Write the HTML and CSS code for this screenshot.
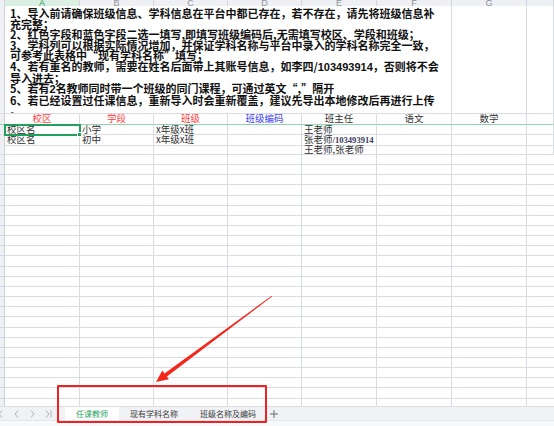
FILE: index.html
```html
<!DOCTYPE html>
<html lang="zh-CN">
<head>
<meta charset="utf-8">
<title>任课教师</title>
<link rel="stylesheet" href="styles.css">
</head>
<body>
<div class="app">
  <div class="row colhead">
    <div class="hc"></div>
    <div class="hc sel">A</div>
    <div class="hc">B</div>
    <div class="hc">C</div>
    <div class="hc">D</div>
    <div class="hc">E</div>
    <div class="hc">F</div>
    <div class="hc">G</div>
    <div class="hc"></div>
  </div>

  <div class="row intro-row">
    <div class="rh"></div>
    <div class="cell intro">
      <p>1、导入前请确保班级信息、学科信息在平台中都已存在，若不存在，请先将班级信息补</p>
      <p>充完整；</p>
      <p>2、红色字段和蓝色字段二选一填写,即填写班级编码后,无需填写校区、学段和班级；</p>
      <p>3、学科列可以根据实际情况增加，并保证学科名称与平台中录入的学科名称完全一致，</p>
      <p>可参考此表格中“现有学科名称”填写；</p>
      <p>4、若有重名的教师，需要在姓名后面带上其账号信息，如李四/<span class="num">103493914</span>，否则将不会</p>
      <p>导入进去；</p>
      <p>5、若有<span class="num">2</span>名教师同时带一个班级的同门课程，可通过英文“,”隔开</p>
      <p>6、若已经设置过任课信息，重新导入时会重新覆盖，建议先导出本地修改后再进行上传</p>
      <p>。</p>
    </div>
    <div class="cell"></div>
    <div class="cell"></div>
  </div>

  <div class="row head-row">
    <div class="rh"></div>
    <div class="cell th red">校区</div>
    <div class="cell th red">学段</div>
    <div class="cell th red">班级</div>
    <div class="cell th blue">班级编码</div>
    <div class="cell th">班主任</div>
    <div class="cell th">语文</div>
    <div class="cell th">数学</div>
    <div class="cell"></div>
  </div>

  <div class="row data-row">
    <div class="rh"></div>
    <div class="cell active">校区名</div>
    <div class="cell">小学</div>
    <div class="cell">x年级x班</div>
    <div class="cell"></div>
    <div class="cell">王老师</div>
    <div class="cell"></div>
    <div class="cell"></div>
    <div class="cell"></div>
  </div>
  <div class="row data-row">
    <div class="rh"></div>
    <div class="cell">校区名</div>
    <div class="cell">初中</div>
    <div class="cell">x年级x班</div>
    <div class="cell"></div>
    <div class="cell">张老师<span class="acct">/103493914</span></div>
    <div class="cell"></div>
    <div class="cell"></div>
    <div class="cell"></div>
  </div>
  <div class="row data-row">
    <div class="rh"></div>
    <div class="cell"></div>
    <div class="cell"></div>
    <div class="cell"></div>
    <div class="cell"></div>
    <div class="cell">王老师,张老师</div>
    <div class="cell"></div>
    <div class="cell"></div>
    <div class="cell"></div>
  </div>

  <div class="row filler">
    <div class="rh fill"></div>
    <div class="fill"></div>
    <div class="fill"></div>
    <div class="fill"></div>
    <div class="fill"></div>
    <div class="fill"></div>
    <div class="fill"></div>
    <div class="fill"></div>
    <div class="fill last"></div>
  </div>

  <div class="tabbar">
    <div class="nav">
      <span><svg width="6" height="8" viewBox="0 0 6 8"><line x1="0.5" y1="0.5" x2="0.5" y2="7.5"/><polyline points="5,0.5 2,4 5,7.5"/></svg></span>
      <span><svg width="5" height="8" viewBox="0 0 5 8"><polyline points="4,0.5 1,4 4,7.5"/></svg></span>
      <span><svg width="5" height="8" viewBox="0 0 5 8"><polyline points="1,0.5 4,4 1,7.5"/></svg></span>
      <span><svg width="7" height="8" viewBox="0 0 7 8"><polyline points="1,0.5 4,4 1,7.5"/><line x1="6" y1="0.5" x2="6" y2="7.5"/></svg></span>
    </div>
    <div class="tabs">
      <div class="tab on">任课教师</div>
      <div class="tab">现有学科名称</div>
      <div class="tab">班级名称及编码</div>
    </div>
    <div class="add"><svg width="8" height="8" viewBox="0 0 8 8"><line x1="4" y1="0" x2="4" y2="8"/><line x1="0" y1="4" x2="8" y2="4"/></svg></div>
  </div>
  <div class="status"></div>

  <div class="callout"></div>
  <svg class="arrow" width="554" height="426" viewBox="0 0 554 426">
    <polygon points="272.4,296.3 166.9,376.6 168.9,379.2 156,382 162.3,370.6 164.5,373.4 271.8,295.7"/>
  </svg>
</div>
</body>
</html>
```

FILE: styles.css
```css
:root {
  --line: #d9dce4;
  --cols: 5px 75px 74px 74px 74px 75px 75px 75px 1fr;
}

html, body {
  margin: 0;
  padding: 0;
}

body {
  width: 554px;
  height: 426px;
  overflow: hidden;
  background: #ffffff;
  font-family: "Noto Sans CJK SC", sans-serif;
}

.app {
  position: relative;
  width: 554px;
  height: 426px;
  display: flex;
  flex-direction: column;
  overflow: hidden;
}

.row {
  display: grid;
  grid-template-columns: var(--cols);
  flex: 0 0 auto;
}

/* column header strip (cut off at the top) */
.colhead {
  height: 6px;
  overflow: hidden;
  background: #eef0f4;
}

.hc {
  box-sizing: border-box;
  border-right: 1px solid #d3d6de;
  border-bottom: 1px solid #d3d6de;
  display: flex;
  justify-content: center;
  align-items: flex-end;
  font: 9px/7px "Liberation Sans", sans-serif;
  color: #8d929b;
}

.hc.sel {
  background: #dcefe3;
  color: #259b5a;
  border-bottom-color: #3bb878;
  box-shadow: inset 0 -1px 0 #3bb878;
}

/* generic cells */
.rh {
  box-sizing: border-box;
  background: #eef0f4;
  border-right: 1px solid #cdd0d8;
  border-bottom: 1px solid #dcdfe6;
}

.cell {
  box-sizing: border-box;
  min-width: 0;
  white-space: nowrap;
  border-right: 1px solid var(--line);
  border-bottom: 1px solid var(--line);
}

/* merged instruction cell */
.intro-row {
  grid-template-columns: 5px 447px 75px 1fr;
  height: 108px;
}

.intro {
  padding: 2px 0 0 5px;
  font: 700 11px/10.6px "Noto Sans CJK SC", sans-serif;
  color: #111111;
  overflow: hidden;
}

.intro p {
  margin: 0;
}

.intro .num {
  font-family: "Liberation Sans", sans-serif;
}

/* header row */
.head-row {
  height: 10.5px;
}

.head-row .cell,
.head-row .rh {
  border-bottom-color: #8fd5b0;
}

.th {
  text-align: center;
  font: 9.5px/9.5px "Noto Sans CJK SC", sans-serif;
  color: #333333;
}

.red {
  color: #ff3c3c;
}

.blue {
  color: #3d3df2;
}

/* data rows */
.data-row {
  height: 10.15px;
}

.data-row .cell {
  padding-left: 2px;
  font: 9.5px/9.15px "Noto Sans CJK SC", sans-serif;
  color: #2e2e2e;
}

.acct {
  font: 700 8.6px/9px "Liberation Serif", serif;
  color: #3a3a5c;
}

.active {
  position: relative;
  outline: 2px solid #22a05d;
  outline-offset: -1px;
}

.active::after {
  content: "";
  position: absolute;
  right: -3px;
  bottom: -3px;
  width: 3px;
  height: 3px;
  background: #22a05d;
  border: 1px solid #ffffff;
}

/* empty grid area */
.row.filler {
  flex: 1 1 auto;
  min-height: 0;
}

.fill {
  box-sizing: border-box;
  border-right: 1px solid var(--line);
  background: repeating-linear-gradient(to bottom,
    transparent 0, transparent 9.15px,
    var(--line) 9.15px, var(--line) 10.15px);
}

.rh.fill {
  border-bottom: 0;
  border-right-color: #cdd0d8;
  background: repeating-linear-gradient(to bottom,
    #eef0f4 0, #eef0f4 9.15px,
    #d6d9e0 9.15px, #d6d9e0 10.15px);
}

.fill.last {
  border-right: 0;
}

/* sheet tabs */
.tabbar {
  flex: 0 0 14px;
  box-sizing: border-box;
  display: flex;
  align-items: stretch;
  background: #f1f2f5;
  border-top: 1px solid #dcdee4;
  font: 8px/8px "Noto Sans CJK SC", sans-serif;
  color: #3a3a3a;
}

.nav {
  display: flex;
  align-items: center;
  margin-left: -8px;
  width: 64px;
}

.nav span {
  width: 16px;
  display: flex;
  justify-content: center;
  align-items: center;
}

.nav svg {
  fill: none;
  stroke: #aeb2ba;
  stroke-width: 1;
}

.tabs {
  display: flex;
  margin-left: 9px;
}

.tab {
  display: flex;
  align-items: center;
  padding: 0 11px;
}

.tab.on {
  background: #ffffff;
  color: #1fa35f;
}

.add {
  width: 14px;
  display: flex;
  justify-content: center;
  align-items: center;
}

.add svg {
  stroke: #666a72;
  stroke-width: 1;
}

.status {
  flex: 0 0 5px;
  background: #f8f9fb;
  border-top: 1px solid #e3e5ea;
}

/* annotation overlay */
.callout {
  position: absolute;
  left: 57px;
  top: 385px;
  width: 210px;
  height: 38px;
  box-sizing: border-box;
  border: 2px solid #ef2222;
  border-radius: 1px;
}

.arrow {
  position: absolute;
  left: 0;
  top: 0;
  pointer-events: none;
}

.arrow polygon {
  fill: #f5261a;
}
```
